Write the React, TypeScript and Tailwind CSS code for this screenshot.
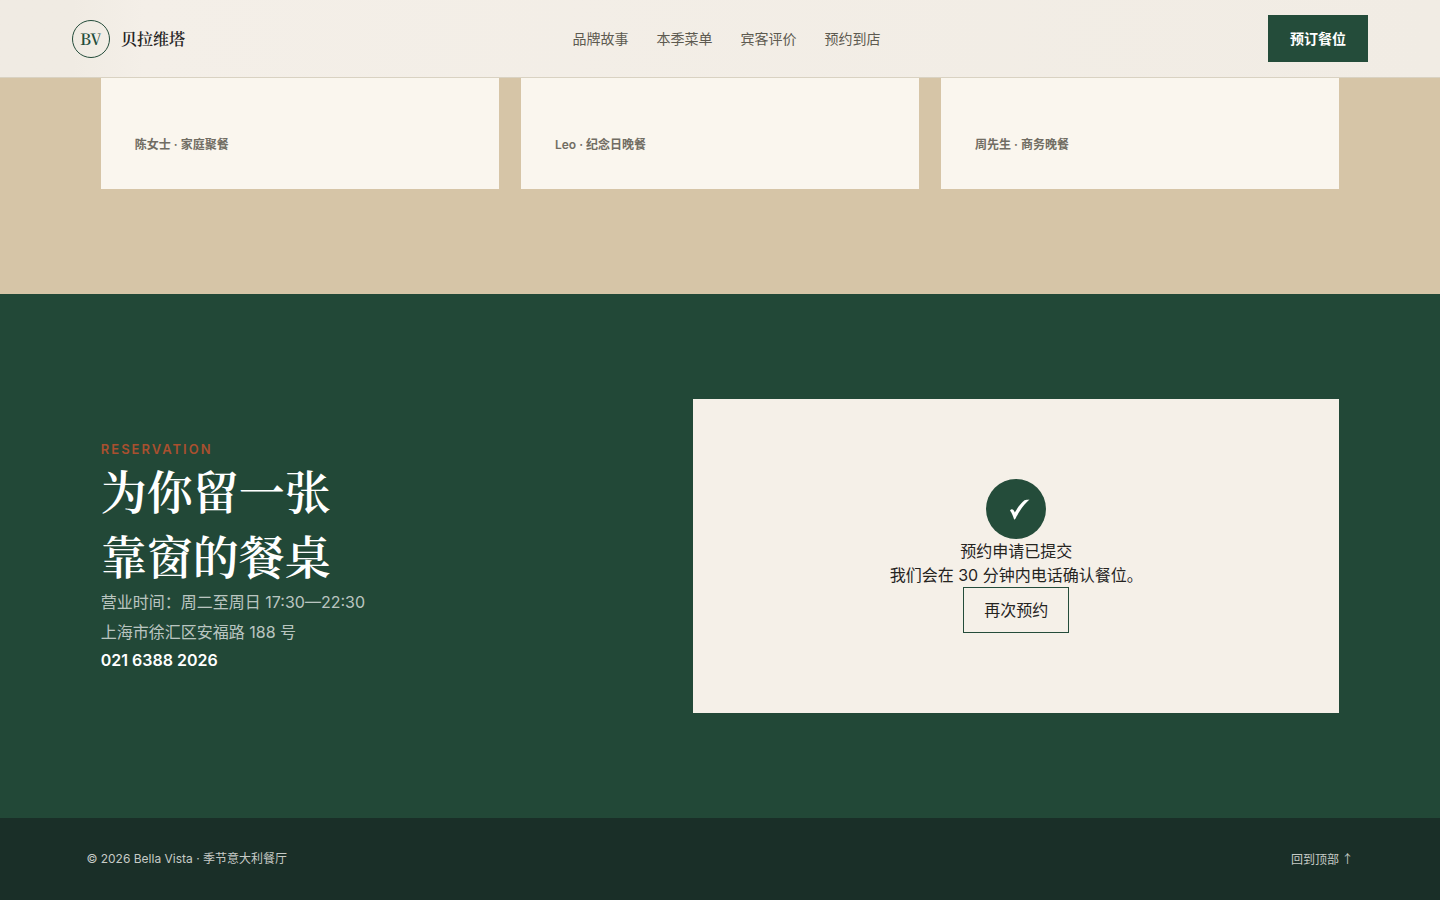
const navLinks = [
  ['品牌故事', '#story'],
  ['本季菜单', '#menu'],
  ['宾客评价', '#reviews'],
  ['预约到店', '#reservation'],
]

const guests = ['陈女士 · 家庭聚餐', 'Leo · 纪念日晚餐', '周先生 · 商务晚餐']

function Header() {
  return (
    <header className="fixed inset-x-0 top-0 z-50 flex items-center justify-between border-b border-[#d9d2c2] bg-linear-to-r from-[#f0ebe3] from-5% via-[#f4efe8] via-10% to-[#f1ece4] px-[5%] py-[15px]">
      <a
        href="#top"
        className="flex items-center gap-[11px] text-base font-semibold font-['Noto_Serif_CJK_SC','Liberation_Serif',serif]"
      >
        <span className="flex size-[38px] items-center justify-center rounded-full border border-[#244c3a] text-[#244c3a]">
          BV
        </span>
        <span>贝拉维塔</span>
      </a>
      <nav className="flex gap-7 text-sm text-[#5d5a50]">
        {navLinks.map(([label, href]) => (
          <a key={href} href={href}>
            {label}
          </a>
        ))}
      </nav>
      <button type="button" className="h-[47px] bg-[#244c3a] px-[22px] text-sm font-semibold text-white">
        预订餐位
      </button>
    </header>
  )
}

function Reviews() {
  return (
    <section id="reviews" className="bg-[#d6c5a7] px-[7%] pb-[105px]">
      <div className="grid grid-cols-3 gap-[22px]">
        {guests.map((guest) => (
          <article key={guest} className="bg-[#faf6ee] px-[34px] pt-[135px] pb-[34px]">
            <p className="text-xs leading-5 font-semibold text-[#716d63]">{guest}</p>
          </article>
        ))}
      </div>
    </section>
  )
}

function Reservation() {
  return (
    <section
      id="reservation"
      className="grid grid-cols-[3fr_4fr] items-center gap-[108px] bg-[#224837] px-[7%] py-[105px] text-white"
    >
      <div className="pb-0.5">
        <p className="text-[13px] leading-6 font-semibold tracking-[2px] text-[#a9502f]">RESERVATION</p>
        <h2 className="text-[46px] leading-[65px] font-semibold font-['Liberation_Serif','Noto_Serif_CJK_SC',serif]">
          为你留一张
          <br />
          靠窗的餐桌
        </h2>
        <p className="-mt-1 leading-[30px] text-white/70">
          营业时间：周二至周日 17:30—22:30
          <br />
          上海市徐汇区安福路 188 号
        </p>
        <a href="tel:02163882026" className="block leading-[26px] font-semibold">
          021 6388 2026
        </a>
      </div>
      <div className="flex flex-col items-center bg-[#f5f0e8] py-20 text-center text-[#25241f]">
        <span className="flex size-[60px] items-center justify-center rounded-full bg-[#244c3a]">
          <svg viewBox="0 0 60 60" className="size-full" fill="white" aria-hidden="true">
            <path d="M24 31.5 C25.5 29.5 27.5 30 28.8 33.5 C32 28 35.5 23.5 38.5 21.3 C40 20.5 41.5 20.7 43.5 20.4 C37.5 26 33 32 29.6 39.6 L28.2 40.8 C27 37 26 34 24 31.5 Z" />
          </svg>
        </span>
        <h3>预约申请已提交</h3>
        <p>我们会在 30 分钟内电话确认餐位。</p>
        <button type="button" className="h-[46px] border border-[#244c3a] px-5">
          再次预约
        </button>
      </div>
    </section>
  )
}

function Footer() {
  return (
    <footer className="flex items-center justify-between bg-[#1a2f28] px-[6%] py-[30px] text-xs leading-[22px] text-[#c6cbc6]">
      <p>© 2026 Bella Vista · 季节意大利餐厅</p>
      <a href="#top" className="font-['Noto_Sans_CJK_SC',sans-serif]">
        回到顶部 ↑
      </a>
    </footer>
  )
}

export default function App() {
  return (
    <div
      id="top"
      lang="zh-CN"
      className="min-h-screen bg-[#1a2b26] font-['Inter','Noto_Sans_CJK_SC',sans-serif] text-base text-[#25241f]"
    >
      <Header />
      <main>
        <Reviews />
        <Reservation />
      </main>
      <Footer />
    </div>
  )
}
